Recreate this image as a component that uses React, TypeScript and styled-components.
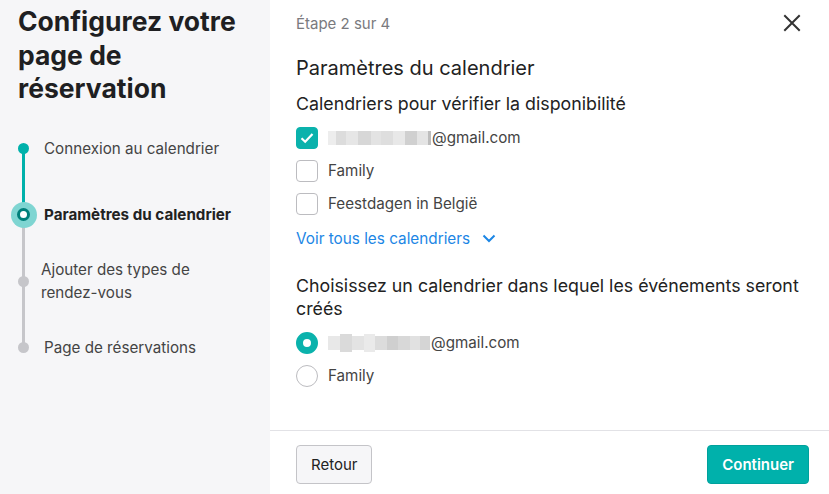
import React from "react";
import styled, { createGlobalStyle } from "styled-components";

const Global = createGlobalStyle`
  html, body { margin: 0; padding: 0; }
  body { font-family: Inter, "Noto Sans", sans-serif; color: #222; background: #fff; }
  * { box-sizing: border-box; }
`;

const Page = styled.div`
  display: flex;
  width: 829px;
  height: 494px;
  overflow: hidden;
`;

const Sidebar = styled.aside`
  width: 270px;
  flex-shrink: 0;
  background: #f6f6f8;
  padding: 5px 0 0 18px;
`;

const Title = styled.h1`
  margin: 0;
  font-size: 26.5px;
  line-height: 33.5px;
  font-weight: 700;
  color: #1f1f22;
`;

const Steps = styled.ol`
  list-style: none;
  margin: 0;
  padding: 0;
  margin-top: 10px;
  position: relative;
`;

const Step = styled.li<{ $h: number; $pad?: number }>`
  position: relative;
  height: ${(p) => p.$h}px;
  display: flex;
  align-items: center;
  padding-left: ${(p) => p.$pad ?? 26}px;
`;

const StepLabel = styled.span<{ $active?: boolean }>`
  font-size: 15.2px;
  line-height: 23px;
  color: ${(p) => (p.$active ? "#222" : "#444")};
  font-weight: ${(p) => (p.$active ? 700 : 400)};
`;

const Line = styled.span<{ $color: string; $top: number; $height: number }>`
  position: absolute;
  left: 4px;
  width: 3px;
  top: ${(p) => p.$top}px;
  height: ${(p) => p.$height}px;
  background: ${(p) => p.$color};
`;

const Dot = styled.span<{ $color: string }>`
  position: absolute;
  left: 0;
  top: 50%;
  width: 11px;
  height: 11px;
  margin-top: -5.5px;
  border-radius: 50%;
  background: ${(p) => p.$color};
`;

const ActiveDot = styled.span`
  position: absolute;
  left: -7.5px;
  top: 50%;
  width: 26px;
  height: 26px;
  margin-top: -13px;
  border-radius: 50%;
  background: #7fd5d2;
  display: flex;
  align-items: center;
  justify-content: center;
  &::after {
    content: "";
    width: 7px;
    height: 7px;
    border-radius: 50%;
    background: #fff;
    border: 3px solid #007f7a;
  }
`;

const Main = styled.main`
  flex: 1;
  display: flex;
  flex-direction: column;
`;

const Content = styled.div`
  flex: 1;
  padding: 12px 20px 0 26px;
`;

const TopBar = styled.div`
  display: flex;
  justify-content: space-between;
  align-items: center;
  height: 22px;
`;

const StepCount = styled.span`
  font-size: 15px;
  color: #7a7a7e;
`;

const CloseBtn = styled.button`
  border: none;
  background: none;
  padding: 0;
  margin-right: 8px;
  width: 18px;
  height: 18px;
  display: flex;
  cursor: pointer;
`;

const SectionTitle = styled.h2`
  margin: 22px 0 0;
  font-size: 20px;
  font-weight: 400;
  line-height: 24px;
  color: #222;
`;

const Question = styled.h3`
  margin: 0;
  font-size: 17.8px;
  font-weight: 400;
  line-height: 23px;
  color: #222;
`;

const Q1 = styled(Question)`
  margin-top: 12px;
`;

const Q2 = styled(Question)`
  margin-top: 24px;
`;

const OptionList = styled.div`
  display: flex;
  flex-direction: column;
  margin-top: 6px;
`;

const Option = styled.label`
  display: flex;
  align-items: center;
  gap: 10px;
  height: 33px;
  font-size: 15.2px;
  color: #444;
`;

const Box = styled.span<{ $checked?: boolean }>`
  width: 22px;
  height: 22px;
  border-radius: 4px;
  border: 1px solid ${(p) => (p.$checked ? "#0ab2ac" : "#bcbcc0")};
  background: ${(p) => (p.$checked ? "#0ab2ac" : "#fff")};
  display: flex;
  align-items: center;
  justify-content: center;
  flex-shrink: 0;
`;

const Radio = styled.span<{ $checked?: boolean }>`
  width: 22px;
  height: 22px;
  border-radius: 50%;
  flex-shrink: 0;
  border: ${(p) => (p.$checked ? "7px solid #0ab2ac" : "1px solid #bcbcc0")};
  background: #fff;
`;

const Redacted = styled.span`
  display: inline-flex;
  align-items: center;
  height: 18px;
  margin-right: 1px;
`;

const Blur = styled.span<{ $w: number; $c: string; $h?: number }>`
  display: inline-block;
  width: ${(p) => p.$w}px;
  height: ${(p) => p.$h ?? 14}px;
  background: ${(p) => p.$c};
`;

const Email = styled.span`
  display: inline-flex;
  align-items: center;
`;

const MoreLink = styled.button`
  border: none;
  background: none;
  padding: 0;
  margin-top: 7px;
  display: flex;
  align-items: center;
  gap: 12px;
  font-family: inherit;
  font-size: 15.3px;
  color: #1c86e5;
  cursor: pointer;
  height: 23px;
`;

const Footer = styled.footer`
  border-top: 1px solid #e2e2e6;
  height: 64px;
  display: flex;
  justify-content: space-between;
  align-items: flex-start;
  padding: 14px 20px 0 26px;
`;

const Button = styled.button<{ $primary?: boolean }>`
  height: 39px;
  padding: 0 14px;
  font-family: inherit;
  font-size: 15px;
  border-radius: 4px;
  cursor: pointer;
  border: 1px solid ${(p) => (p.$primary ? "#00a19c" : "#c4c4c8")};
  background: ${(p) => (p.$primary ? "#00b1ab" : "#f6f6f8")};
  color: ${(p) => (p.$primary ? "#fff" : "#222")};
  font-weight: ${(p) => (p.$primary ? 600 : 400)};
`;

type B = { w: number; c: string; h?: number };

const blocks1: B[] = [
  { w: 8, c: "#ededed" },
  { w: 10, c: "#dcdcdc" },
  { w: 12, c: "#e6e6e6" },
  { w: 13, c: "#d7d7d7" },
  { w: 10, c: "#e3e3e3" },
  { w: 12, c: "#dedede" },
  { w: 12, c: "#e8e8e8" },
  { w: 12, c: "#d0d0d0" },
  { w: 11, c: "#e4e4e4" },
  { w: 3, c: "#bdbdbd" },
];
const blocks2: B[] = [
  { w: 12, c: "#e8e8e8" },
  { w: 12, c: "#dadada", h: 18 },
  { w: 12, c: "#e3e3e3" },
  { w: 11, c: "#eaeaea", h: 18 },
  { w: 12, c: "#dcdcdc" },
  { w: 11, c: "#cfcfcf" },
  { w: 12, c: "#d8d8d8" },
  { w: 10, c: "#e1e1e1" },
  { w: 10, c: "#d5d5d5" },
];

const RedactedEmail = ({ blocks }: { blocks: B[] }) => (
  <Email>
    <Redacted aria-label="adresse masquée">
      {blocks.map((b, i) => (
        <Blur key={i} $w={b.w} $c={b.c} $h={b.h} />
      ))}
    </Redacted>
    @gmail.com
  </Email>
);

export default function App() {
  return (
    <>
      <Global />
      <Page>
        <Sidebar>
          <Title>
            Configurez votre
            <br />
            page de
            <br />
            réservation
          </Title>
          <Steps>
            <Step $h={66}>
              <Line $color="#00b1ab" $top={33} $height={66} />
              <Dot $color="#00b1ab" />
              <StepLabel>Connexion au calendrier</StepLabel>
            </Step>
            <Step $h={66}>
              <Line $color="#c6c6ca" $top={33} $height={133} />
              <ActiveDot />
              <StepLabel $active>Paramètres du calendrier</StepLabel>
            </Step>
            <Step $h={67} $pad={23}>
              <Dot $color="#c6c6ca" />
              <StepLabel>
                Ajouter des types de
                <br />
                rendez-vous
              </StepLabel>
            </Step>
            <Step $h={66}>
              <Dot $color="#c6c6ca" />
              <StepLabel>Page de réservations</StepLabel>
            </Step>
          </Steps>
        </Sidebar>
        <Main>
          <Content>
            <TopBar>
              <StepCount>Étape 2 sur 4</StepCount>
              <CloseBtn aria-label="Fermer">
                <svg width="18" height="18" viewBox="0 0 18 18">
                  <path d="M2 2 L16 16 M16 2 L2 16" stroke="#333" strokeWidth="2" strokeLinecap="square" />
                </svg>
              </CloseBtn>
            </TopBar>
            <SectionTitle>Paramètres du calendrier</SectionTitle>
            <Q1>Calendriers pour vérifier la disponibilité</Q1>
            <OptionList>
              <Option>
                <Box $checked>
                  <svg width="14" height="12" viewBox="0 0 14 12">
                    <path d="M1.5 6.2 L5.2 9.8 L12.5 2" fill="none" stroke="#fff" strokeWidth="2.2" />
                  </svg>
                </Box>
                <RedactedEmail blocks={blocks1} />
              </Option>
              <Option>
                <Box />
                Family
              </Option>
              <Option>
                <Box />
                Feestdagen in België
              </Option>
            </OptionList>
            <MoreLink>
              Voir tous les calendriers
              <svg width="14" height="9" viewBox="0 0 14 9">
                <path d="M1.5 1.5 L7 7 L12.5 1.5" fill="none" stroke="#1c86e5" strokeWidth="2" />
              </svg>
            </MoreLink>
            <Q2>Choisissez un calendrier dans lequel les événements seront créés</Q2>
            <OptionList>
              <Option>
                <Radio $checked />
                <RedactedEmail blocks={blocks2} />
              </Option>
              <Option>
                <Radio />
                Family
              </Option>
            </OptionList>
          </Content>
          <Footer>
            <Button>Retour</Button>
            <Button $primary>Continuer</Button>
          </Footer>
        </Main>
      </Page>
    </>
  );
}
